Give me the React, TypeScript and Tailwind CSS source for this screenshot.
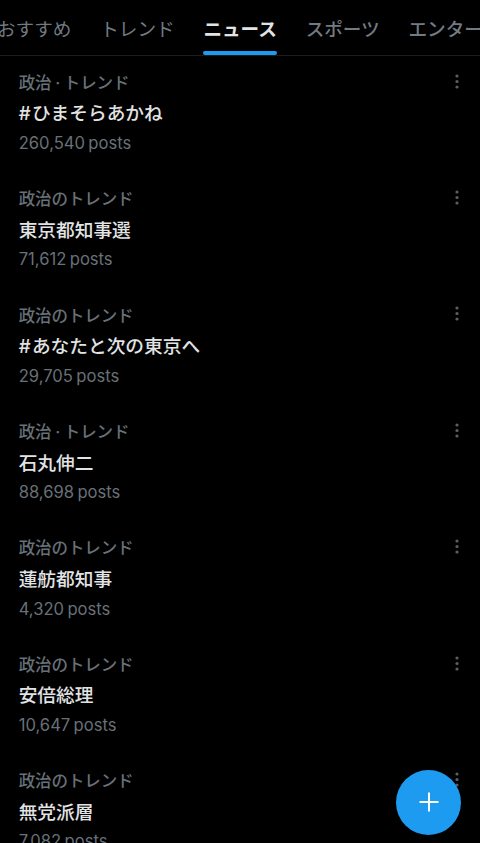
import React, { useState } from 'react';
import clsx from 'clsx';

const tabs = ['おすすめ', 'トレンド', 'ニュース', 'スポーツ', 'エンターテイメント'];

const trends = [
  { id: 1, context: '政治 · トレンド', name: '#ひまそらあかね', posts: '260,540' },
  { id: 2, context: '政治のトレンド', name: '東京都知事選', posts: '71,612' },
  { id: 3, context: '政治のトレンド', name: '#あなたと次の東京へ', posts: '29,705' },
  { id: 4, context: '政治 · トレンド', name: '石丸伸二', posts: '88,698' },
  { id: 5, context: '政治のトレンド', name: '蓮舫都知事', posts: '4,320' },
  { id: 6, context: '政治のトレンド', name: '安倍総理', posts: '10,647' },
  { id: 7, context: '政治のトレンド', name: '無党派層', posts: '7,082' },
];

const MoreIcon = () => (
  <svg viewBox="0 0 4 16" className="w-1 h-4" fill="currentColor">
    <circle cx="2" cy="2" r="1.6" />
    <circle cx="2" cy="7.5" r="1.6" />
    <circle cx="2" cy="13" r="1.6" />
  </svg>
);

const TrendRow = ({ trend }: { trend: (typeof trends)[number] }) => (
  <li className="flex h-[116.4px] shrink-0 items-start justify-between pl-[18.7px] pr-[21.5px] pt-[14.9px]">
    <div>
      <p className="h-6 font-['Inter','Noto_Sans_CJK_JP',sans-serif] text-[16.5px] font-medium leading-6 tracking-[-0.1px] text-[#687078] [word-spacing:-0.6px]">
        {trend.context}
      </p>
      <h3 className="mt-[5.6px] h-7 font-['Inter','Noto_Sans_CJK_JP',sans-serif] text-[18.7px] font-medium leading-7 text-[#e1e3e4]">
        {trend.name.startsWith('#') && <span className="mr-[1.3px]">#</span>}
        {trend.name.replace('#', '')}
      </h3>
      <p className="mt-[2.6px] h-6 font-['Inter','Noto_Sans_CJK_JP',sans-serif] text-[16.6px] leading-6 text-[#687078] [word-spacing:-1.3px]">
        {trend.posts} posts
      </p>
    </div>
    <button className="mt-[2.8px] flex text-[#5c5f62]" aria-label="More">
      <MoreIcon />
    </button>
  </li>
);

export default function App() {
  const [active, setActive] = useState(2);

  return (
    <div className="relative flex h-[843px] w-[480px] flex-col overflow-hidden bg-black font-['Noto_Sans_CJK_JP',sans-serif]" lang="ja">
      <nav className="-ml-[3px] flex h-14 shrink-0 gap-[28.8px] border-b border-[#1a1c1e]">
        {tabs.map((tab, i) => (
          <button
            key={tab}
            onClick={() => setActive(i)}
            className={clsx(
              'relative h-[55px] shrink-0 whitespace-nowrap pt-px text-[18.6px] leading-none',
              i === active && 'font-bold text-[#e1e3e4]',
              i < active && 'font-normal text-[#727a82]',
              i > active && 'font-medium text-[#727a82]'
            )}
          >
            {tab}
            {i === active && <span className="absolute inset-x-0 bottom-0 h-1 rounded-full bg-[#1d9bf0]" />}
          </button>
        ))}
      </nav>

      <ul className="flex flex-col">
        {trends.map((trend) => (
          <TrendRow key={trend.id} trend={trend} />
        ))}
      </ul>

      <button
        className="absolute bottom-[8.5px] right-[19px] flex size-[65px] items-center justify-center rounded-full bg-[#1d9bf0] text-white"
        aria-label="Compose"
      >
        <svg viewBox="0 0 20 20" className="size-5" stroke="currentColor" strokeWidth="2">
          <path d="M10 .5v19M.5 10h19" />
        </svg>
      </button>
    </div>
  );
}
